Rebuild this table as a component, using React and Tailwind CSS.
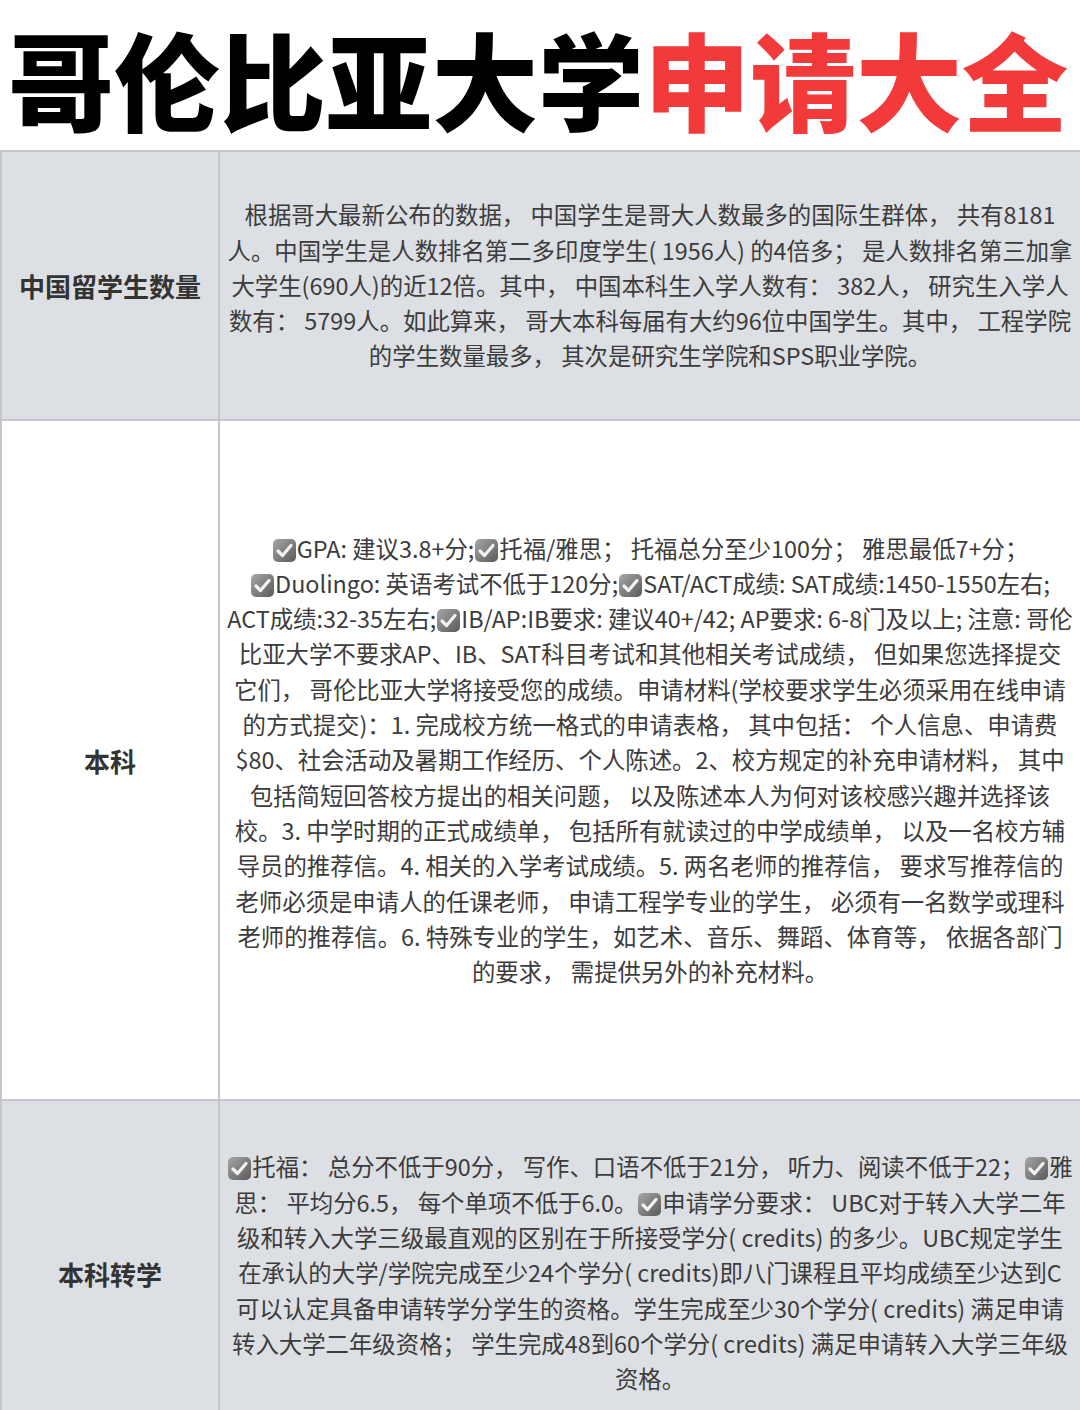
import React from "react";

const font = { fontFamily: '"Noto Sans CJK SC", "Noto Sans", sans-serif' };

function Check() {
  return (
    <span className="inline-block w-[23px] h-[23px] rounded-[5px] bg-gradient-to-br from-[#a8a8a8] via-[#808080] to-[#5a5a5a] align-[-4px] mx-[1px]">
      <svg className="block" width="23" height="23" viewBox="0 0 23 23">
        <path d="M5 12 L9.5 16.5 L18 6.5" fill="none" stroke="#f2f2f2" strokeWidth="3.2" strokeLinecap="round" strokeLinejoin="round" />
      </svg>
    </span>
  );
}

// split a line on the ☑ marker and put the icon in
function Line({ text }) {
  const parts = text.split("☑");
  return (
    <div className="whitespace-nowrap text-center">
      {parts.map((p, i) => (
        <React.Fragment key={i}>
          {i > 0 && <Check />}
          {p}
        </React.Fragment>
      ))}
    </div>
  );
}

const rows = [
  {
    label: "中国留学生数量",
    bg: "bg-[#dcdfe3]",
    h: "h-[269px]",
    lines: [
      "根据哥大最新公布的数据， 中国学生是哥大人数最多的国际生群体， 共有8181",
      "人。中国学生是人数排名第二多印度学生( 1956人) 的4倍多； 是人数排名第三加拿",
      "大学生(690人)的近12倍。其中， 中国本科生入学人数有： 382人， 研究生入学人",
      "数有： 5799人。如此算来， 哥大本科每届有大约96位中国学生。其中， 工程学院",
      "的学生数量最多， 其次是研究生学院和SPS职业学院。",
    ],
  },
  {
    label: "本科",
    bg: "bg-white",
    h: "h-[680px]",
    lines: [
      "☑GPA: 建议3.8+分;☑托福/雅思； 托福总分至少100分； 雅思最低7+分；",
      "☑Duolingo: 英语考试不低于120分;☑SAT/ACT成绩: SAT成绩:1450-1550左右;",
      "ACT成绩:32-35左右;☑IB/AP:IB要求: 建议40+/42; AP要求: 6-8门及以上; 注意: 哥伦",
      "比亚大学不要求AP、IB、SAT科目考试和其他相关考试成绩， 但如果您选择提交",
      "它们， 哥伦比亚大学将接受您的成绩。申请材料(学校要求学生必须采用在线申请",
      "的方式提交)：1. 完成校方统一格式的申请表格， 其中包括： 个人信息、申请费",
      "$80、社会活动及暑期工作经历、个人陈述。2、校方规定的补充申请材料， 其中",
      "包括简短回答校方提出的相关问题， 以及陈述本人为何对该校感兴趣并选择该",
      "校。3. 中学时期的正式成绩单， 包括所有就读过的中学成绩单， 以及一名校方辅",
      "导员的推荐信。4. 相关的入学考试成绩。5. 两名老师的推荐信， 要求写推荐信的",
      "老师必须是申请人的任课老师， 申请工程学专业的学生， 必须有一名数学或理科",
      "老师的推荐信。6. 特殊专业的学生，如艺术、音乐、舞蹈、体育等， 依据各部门",
      "的要求， 需提供另外的补充材料。",
    ],
  },
  {
    label: "本科转学",
    bg: "bg-[#dcdfe3]",
    h: "h-[346px]",
    lines: [
      "☑托福： 总分不低于90分， 写作、口语不低于21分， 听力、阅读不低于22；☑雅",
      "思： 平均分6.5， 每个单项不低于6.0。☑申请学分要求： UBC对于转入大学二年",
      "级和转入大学三级最直观的区别在于所接受学分( credits) 的多少。UBC规定学生",
      "在承认的大学/学院完成至少24个学分( credits)即八门课程且平均成绩至少达到C",
      "可以认定具备申请转学分学生的资格。学生完成至少30个学分( credits) 满足申请",
      "转入大学二年级资格； 学生完成48到60个学分( credits) 满足申请转入大学三年级",
      "资格。",
    ],
  },
];

export default function App() {
  return (
    <div className="w-[1080px] h-[1410px] overflow-hidden bg-white" style={font}>
      <header className="h-[150px] flex items-center pl-[8px] pt-[6px] text-[106px] font-black leading-[1.2]">
        <span className="text-black">哥伦比亚大学</span>
        <span className="text-[#f23a3a]">申请大全</span>
      </header>

      <div className="border-t-2 border-l-2 border-[#c4c6c9]">
        {rows.map((r) => (
          <div key={r.label} className={`flex ${r.bg} ${r.h} border-b-2 border-[#c4c6c9]`}>
            <div className="w-[218px] shrink-0 flex items-center justify-center border-r-2 border-[#c4c6c9] text-[26px] font-bold text-[#333]">
              {r.label}
            </div>
            <div className="flex-1 flex flex-col justify-center items-center text-[23.4px] leading-[35.3px] text-[#3c3c3c]">
              {r.lines.map((l, i) => (
                <Line key={i} text={l} />
              ))}
            </div>
          </div>
        ))}
      </div>
    </div>
  );
}
